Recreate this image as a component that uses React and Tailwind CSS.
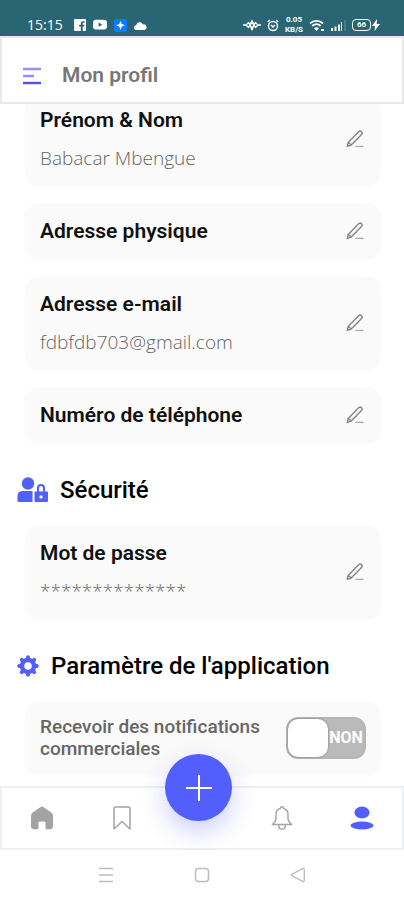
import { useState } from 'react'
import { BsYoutube } from 'react-icons/bs'

const profileFields = [
  { key: 'name', label: 'Prénom & Nom', value: 'Babacar Mbengue' },
  { key: 'address', label: 'Adresse physique' },
  { key: 'email', label: 'Adresse e-mail', value: 'fdbfdb703@gmail.com' },
  { key: 'phone', label: 'Numéro de téléphone' },
]

function StatusBar() {
  return (
    <div className="flex h-9 shrink-0 items-end justify-between bg-[#296573] pr-6 pb-px pl-[27px] text-white">
      <div className="flex h-5 items-center gap-[7px]">
        <span className="mr-1 font-['Open_Sans',sans-serif] text-sm font-medium">15:15</span>
        <svg width="12" height="12" viewBox="0 0 12 12" aria-label="Facebook">
          <path fill="currentColor" fillRule="evenodd" d="M1 0h10a1 1 0 0 1 1 1v10a1 1 0 0 1-1 1H8.700V7.500h1.600l.3-1.800H8.700V4.600c0-.5.3-.8.900-.8h1V2.200H9.200C7.600 2.200 6.800 3.100 6.800 4.500v1.200H5.200v1.800h1.600V12H1a1 1 0 0 1-1-1V1a1 1 0 0 1 1-1z" />
        </svg>
        <BsYoutube size={14} aria-label="YouTube" />
        <svg width="13" height="13" viewBox="0 0 13 13" aria-hidden="true">
          <rect width="13" height="13" rx="2" fill="#0a7cff" />
          <path fill="#fff" d="M6.500 2l1.200 3L11 6.300 7.700 7.500 6.500 11 5.300 7.500 2 6.300 5.300 5z" />
        </svg>
        <svg width="13" height="9" viewBox="0 0 13 9" aria-hidden="true">
          <path fill="currentColor" d="M2.500 9a2.400 2.400 0 0 1-.3-4.800A3.600 3.600 0 0 1 9 3.400 2.900 2.900 0 0 1 10.500 9z" />
        </svg>
      </div>
      <div className="flex h-5 items-center gap-[6px]">
        <svg width="18" height="12" viewBox="0 0 18 12" fill="none" stroke="currentColor" strokeLinejoin="round" aria-hidden="true">
          <path strokeWidth="1.300" d="M0 6h3l2.500-2.500L9 9l3.500-5.500L15 6h3M3 6l2.500 2.500L9 1.500l3.500 7L15 6M7 6l2-2.500L11 6 9 11z" />
        </svg>
        <svg width="12" height="13" viewBox="0 0 12 13" fill="none" stroke="currentColor" aria-hidden="true">
          <circle cx="6" cy="7" r="4.500" strokeWidth="1.400" />
          <path strokeWidth="1.400" d="M.8 3l2-2M11.200 3l-2-2M4 6l2 2 2-2" />
        </svg>
        <div className="flex w-[18px] flex-col items-center font-[Roboto,sans-serif] text-[8px] leading-[10px] font-bold">
          <span>0.05</span>
          <span>KB/S</span>
        </div>
        <svg width="16" height="13" viewBox="0 0 16 13" fill="none" stroke="currentColor" aria-hidden="true">
          <path strokeWidth="1.800" d="M1 4.500C4.500.9 10.500.9 14 4.500M3.300 7c2.400-2.400 6-2.400 8.400 0" />
          <path fill="currentColor" stroke="none" d="M7.500 12L5 9.200c1.400-1.300 3.600-1.300 5 0zM12 10h3v2h-3z" />
        </svg>
        <svg width="15" height="12" viewBox="0 0 15 12" fill="currentColor" aria-hidden="true">
          <path d="M0 9h2v3H0zM3.500 7.500h2V12h-2zM7 5.500h2V12H7z" />
          <path opacity=".8" d="M10 3h1v9h-1z" />
          <path opacity=".3" d="M13.500 1h1v11h-1z" />
        </svg>
        <div className="flex items-center gap-px">
          <span className="flex h-3 w-[19px] items-center justify-center rounded-[4px] border border-white font-[Roboto,sans-serif] text-[8px] font-bold">
            66
          </span>
          <svg width="8" height="12" viewBox="0 0 8 12" aria-hidden="true">
            <path fill="currentColor" d="M5 0L0 7h3L2.500 12 8 5H4.700z" />
          </svg>
        </div>
      </div>
    </div>
  )
}

function EditButton({ label }) {
  return (
    <button type="button" aria-label={`Modifier ${label}`} className="text-[#858585]">
      <svg width="18" height="18" viewBox="0 0 18 18" fill="none" stroke="currentColor" strokeLinejoin="round" strokeLinecap="round">
        <path strokeWidth="1.400" d="M1.200 16.400l1-4L12.600 1.700c1-1 2.200-.9 3 0 .8.800.8 1.900-.1 2.800L5.200 15.100zM2.400 12.400l2.700 2.600" />
        <path stroke="#aaa" strokeWidth="1.400" d="M10 16.400h7" />
      </svg>
    </button>
  )
}

function FieldCard({ label, value }) {
  return (
    <div className="flex items-center justify-between rounded-xl bg-[#fafafa] py-3 pr-4 pl-[14px] shadow-[0_1px_4px_rgba(0,0,0,0.03)]">
      <div>
        <h3 className="text-[21px] leading-[30px] font-semibold text-[#111]">{label}</h3>
        {value && (
          <p className="mt-2 font-['Open_Sans',sans-serif] text-[19px] leading-[30px] font-light text-[#666]">{value}</p>
        )}
      </div>
      <EditButton label={label} />
    </div>
  )
}

function Toggle({ id }) {
  const [checked, setChecked] = useState(false)

  return (
    <span className={`relative flex h-[42px] w-20 shrink-0 items-center rounded-xl border-2 ${checked ? 'flex-row-reverse border-[#525ffc] bg-[#525ffc]' : 'border-[#b5b5b5] bg-[#bababa]'}`}>
      <input
        id={id}
        type="checkbox"
        role="switch"
        checked={checked}
        onChange={(e) => setChecked(e.target.checked)}
        className="absolute inset-0 cursor-pointer opacity-0"
      />
      <span className="h-full w-10 rounded-[10px] bg-white shadow-[0_0_2px_rgba(0,0,0,0.4)]" />
      <span className="flex-1 text-center text-base font-bold text-white">{checked ? 'OUI' : 'NON'}</span>
    </span>
  )
}

function BottomNav() {
  return (
    <nav className="grid h-16 shrink-0 grid-cols-5 items-center justify-items-center border-2 border-[#eef0f3] bg-white">
      <button type="button" aria-label="Accueil" className="text-[#a3a3a3]">
        <svg width="24" height="24" viewBox="0 0 24 24" fill="currentColor">
          <path d="M10.300 1.200a3 3 0 0 1 3.400 0l7.600 5.200A4 4 0 0 1 23 9.700V20a3.200 3.200 0 0 1-3.200 3.200H16.500a1 1 0 0 1-1-1V17a1.500 1.500 0 0 0-1.500-1.500h-4A1.500 1.500 0 0 0 8.500 17v5.200a1 1 0 0 1-1 1H4.200A3.200 3.200 0 0 1 1 20V9.700a4 4 0 0 1 1.700-3.300z" />
        </svg>
      </button>
      <button type="button" aria-label="Favoris" className="text-[#a3a3a3]">
        <svg width="24" height="24" viewBox="0 0 24 24" fill="none" stroke="currentColor" strokeWidth="1.500" strokeLinejoin="round">
          <path d="M4 23V2.500A1.500 1.500 0 0 1 5.500 1h13A1.500 1.500 0 0 1 20 2.500V23l-8-7.500z" />
        </svg>
      </button>
      <button
        type="button"
        aria-label="Ajouter"
        className="-mt-[34px] mr-[7px] flex size-[67px] items-center justify-center self-start rounded-full bg-[#525ffc] text-white shadow-[0_10px_24px_rgba(82,95,252,0.3)]"
      >
        <svg width="26" height="26" viewBox="0 0 26 26" stroke="currentColor" strokeWidth="2">
          <path d="M13 0v26M0 13h26" />
        </svg>
      </button>
      <button type="button" aria-label="Notifications" className="text-[#a3a3a3]">
        <svg width="24" height="24" viewBox="0 0 24 24" fill="none" stroke="currentColor" strokeWidth="1.400" strokeLinejoin="round">
          <path d="M12 .8c1 0 1.600.7 1.800 1.700 2.800.8 4.200 3 4.200 5.700v4.300c0 2.600 1.300 3.900 3.700 6H2.300c2.400-2.100 3.700-3.400 3.700-6V8.200c0-2.700 1.400-4.900 4.200-5.700C10.400 1.500 11 .8 12 .8zM8.800 18.700v1.500c0 1.800 1.400 2.900 3.200 2.900s3.200-1.100 3.200-2.900v-1.500" />
        </svg>
      </button>
      <button type="button" aria-label="Profil" aria-current="page" className="text-[#525ffc]">
        <svg width="24" height="24" viewBox="0 0 24 24" fill="currentColor">
          <ellipse cx="12" cy="6.500" rx="7.500" ry="6" />
          <ellipse cx="12" cy="19.500" rx="11.500" ry="4" />
        </svg>
      </button>
    </nav>
  )
}

function SystemBar() {
  return (
    <div className="flex h-[50px] shrink-0 items-center justify-center gap-20 bg-white text-[#bdbdbd]">
      <button type="button" aria-label="Applications récentes">
        <svg width="16" height="16" viewBox="0 0 16 16" stroke="currentColor" strokeWidth="1.500">
          <path d="M1 1.500h14M1 8h14M1 14.500h14" />
        </svg>
      </button>
      <button type="button" aria-label="Écran d'accueil">
        <svg width="16" height="16" viewBox="0 0 16 16" fill="none" stroke="currentColor" strokeWidth="1.500">
          <rect x="1.500" y="1.500" width="13" height="13" rx="3" />
        </svg>
      </button>
      <button type="button" aria-label="Retour">
        <svg width="16" height="16" viewBox="0 0 16 16" fill="none" stroke="currentColor" strokeWidth="1.400" strokeLinejoin="round">
          <path d="M1.700 7.300l11-5.600c.8-.4 1.600.1 1.600 1v10.600c0 .9-.8 1.400-1.600 1l-11-5.600c-.7-.4-.7-1 0-1.400z" />
        </svg>
      </button>
    </div>
  )
}

export default function App() {
  return (
    <div className="flex h-screen flex-col bg-white font-[Roboto,sans-serif]">
      <StatusBar />

      <header className="flex h-[68px] shrink-0 items-center gap-5 border-2 border-[#e8e8e8] bg-white px-5 pt-3">
        <button type="button" aria-label="Menu">
          <svg width="20" height="18" viewBox="0 0 20 18" fill="none" strokeWidth="2.400">
            <path stroke="#9292f5" d="M1 2h18M1 9h11" />
            <path stroke="#5153dd" d="M1 16h18" />
          </svg>
        </button>
        <h1 className="text-[21px] font-semibold text-[#777]">Mon profil</h1>
      </header>

      <main className="min-h-0 flex-1 overflow-hidden">
        <div className="-mt-[11px] flex flex-col gap-[19px] pr-6 pl-[26px]">
          {profileFields.map((f) => (
            <FieldCard key={f.key} label={f.label} value={f.value} />
          ))}
        </div>

        <section className="mt-8">
          <h2 className="flex items-center gap-3 px-[17px] text-2xl leading-8 font-medium text-black">
            <svg width="31" height="26" viewBox="0 0 31 26" fill="#525ffc" aria-hidden="true">
              <circle cx="11" cy="6.500" r="6.200" />
              <path d="M5 14h10.500v11H2a1.500 1.500 0 0 1-1.500-1.500V19A5 5 0 0 1 5 14z" />
              <path fillRule="evenodd" d="M17.500 14.500H20V11a4 4 0 0 1 8 0v3.500h2a1 1 0 0 1 1 1V24a1 1 0 0 1-1 1H18.500a1 1 0 0 1-1-1zM22 14.500h4V11a2 2 0 0 0-4 0zM24 18.200a1.700 1.700 0 1 0 0 3.400 1.700 1.700 0 0 0 0-3.400z" />
            </svg>
            Sécurité
          </h2>
          <div className="mt-5 pr-6 pl-[26px]">
            <FieldCard label="Mot de passe" value="**************" />
          </div>
        </section>

        <section className="mt-8">
          <h2 className="flex items-center gap-3 px-[17px] text-2xl leading-8 font-medium text-black">
            <svg width="22" height="22" viewBox="0 0 22 22" fill="none" stroke="#525ffc" aria-hidden="true">
              <circle cx="11" cy="11" r="6" strokeWidth="4.500" />
              <path strokeWidth="4" strokeLinecap="round" d="M11 2.200v1M11 18.800v1M2.200 11h1M18.800 11h1M4.800 4.800l.6.6M16.600 16.600l.6.6M4.800 17.200l.6-.6M16.600 5.400l.6-.6" />
            </svg>
            Paramètre de l'application
          </h2>
          <div className="mt-5 pr-6 pl-[26px]">
            <div className="flex items-center justify-between rounded-xl bg-[#fafafa] py-[14px] pr-[14px] pl-[14px] shadow-[0_1px_4px_rgba(0,0,0,0.03)]">
              <label htmlFor="promo" className="w-[230px] text-[19px] leading-[22px] font-medium text-[#666]">
                Recevoir des notifications commerciales
              </label>
              <Toggle id="promo" />
            </div>
          </div>
        </section>
      </main>

      <BottomNav />
      <SystemBar />
    </div>
  )
}
